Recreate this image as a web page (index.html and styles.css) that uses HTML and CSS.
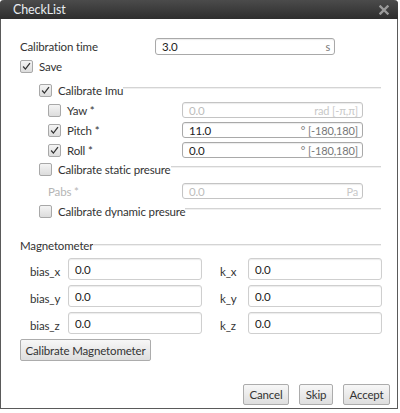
FILE: index.html
```html
<!DOCTYPE html>
<html>
<head>
<meta charset="utf-8">
<link rel="stylesheet" href="styles.css">
</head>
<body>
<div class="window">
  <div class="titlebar">
    <span class="title">CheckList</span>
    <svg class="close" width="10" height="10" viewBox="0 0 10 10"><path d="M1.5 1.5 L8.5 8.5 M8.5 1.5 L1.5 8.5" stroke="#9a9a9a" stroke-width="2.4" stroke-linecap="square"/></svg>
  </div>
  <div class="content">
    <div class="row row-time">
      <span class="lbl lbl-time">Calibration time</span>
      <div class="field field-time"><span class="val">3.0</span><span class="unit">s</span></div>
    </div>
    <div class="row row-save">
      <span class="cb"><svg viewBox="0 0 13 13"><path d="M2.5 6.5 L5.2 9.6 L10.6 2.6" fill="none" stroke="#333" stroke-width="1.5"/></svg></span>
      <span class="cblabel">Save</span>
    </div>

    <div class="group-head gh-imu">
      <span class="cb"><svg viewBox="0 0 13 13"><path d="M2.5 6.5 L5.2 9.6 L10.6 2.6" fill="none" stroke="#333" stroke-width="1.5"/></svg></span>
      <span class="cblabel">Calibrate Imu</span>
      <span class="rule"></span>
    </div>
    <div class="sub sub-first">
      <span class="cb"></span>
      <span class="sublabel">Yaw *</span>
      <div class="field field-imu disabled"><span class="val">0.0</span><span class="unit">rad [-π,π]</span></div>
    </div>
    <div class="sub">
      <span class="cb"><svg viewBox="0 0 13 13"><path d="M2.5 6.5 L5.2 9.6 L10.6 2.6" fill="none" stroke="#333" stroke-width="1.5"/></svg></span>
      <span class="sublabel">Pitch *</span>
      <div class="field field-imu"><span class="val">11.0</span><span class="unit">° [-180,180]</span></div>
    </div>
    <div class="sub">
      <span class="cb"><svg viewBox="0 0 13 13"><path d="M2.5 6.5 L5.2 9.6 L10.6 2.6" fill="none" stroke="#333" stroke-width="1.5"/></svg></span>
      <span class="sublabel">Roll *</span>
      <div class="field field-imu"><span class="val">0.0</span><span class="unit">° [-180,180]</span></div>
    </div>

    <div class="group-head gh-static">
      <span class="cb"></span>
      <span class="cblabel">Calibrate static presure</span>
      <span class="rule"></span>
    </div>
    <div class="sub sub-pabs">
      <span class="sublabel nocb disabled-text">Pabs *</span>
      <div class="field field-imu disabled"><span class="val">0.0</span><span class="unit">Pa</span></div>
    </div>

    <div class="group-head gh-dyn">
      <span class="cb"></span>
      <span class="cblabel">Calibrate dynamic presure</span>
      <span class="rule"></span>
    </div>

    <div class="mag-head">
      <span class="maglabel">Magnetometer</span>
      <span class="rule"></span>
    </div>
    <div class="mag-grid">
      <span class="mlbl">bias_x</span><div class="field mfield"><span class="val">0.0</span></div>
      <span class="mlbl klbl">k_x</span><div class="field mfield"><span class="val">0.0</span></div>
      <span class="mlbl">bias_y</span><div class="field mfield"><span class="val">0.0</span></div>
      <span class="mlbl klbl">k_y</span><div class="field mfield"><span class="val">0.0</span></div>
      <span class="mlbl">bias_z</span><div class="field mfield"><span class="val">0.0</span></div>
      <span class="mlbl klbl">k_z</span><div class="field mfield"><span class="val">0.0</span></div>
    </div>
    <div class="calib-row">
      <button class="btn btn-calib">Calibrate Magnetometer</button>
    </div>
    <div class="footer">
      <button class="btn btn-cancel">Cancel</button>
      <button class="btn btn-skip">Skip</button>
      <button class="btn btn-accept">Accept</button>
    </div>
  </div>
</div>
</body>
</html>
```
FILE: styles.css
```css
* { box-sizing: border-box; }
html, body { margin: 0; padding: 0; background: #ffffff; }
body {
  font-family: "Lato", "Open Sans", sans-serif;
  font-size: 11.5px;
  letter-spacing: -0.15px;
  color: #333;
  width: 400px;
  height: 413px;
  overflow: hidden;
}
.window {
  width: 398px;
  height: 409px;
  border: 1px solid #5a5a5a;
  border-top: none;
  border-radius: 4px 4px 0 0;
  background: #fff;
  display: flex;
  flex-direction: column;
}
.titlebar {
  height: 19px;
  margin: 0 -1px;
  background: linear-gradient(#4b4b4b, #2e2e2e);
  border-radius: 4px 4px 0 0;
  display: flex;
  align-items: center;
  justify-content: space-between;
  padding: 0 9px 0 13px;
}
.title {
  color: #e8ecf0;
  font-size: 12.5px;
  letter-spacing: -0.1px;
}
.close { display: block; }
.content {
  flex: 1;
  display: flex;
  flex-direction: column;
  padding: 0 16px 0 19px;
}
.row { display: flex; align-items: center; }
.row-time { margin-top: 19px; height: 17px; }
.lbl-time { width: 135px; }
.field {
  border: 1px solid #a9a9a9;
  border-radius: 3px;
  background: #fff;
  box-shadow: inset 0 1px 1px rgba(0,0,0,0.08);
  display: flex;
  align-items: center;
  justify-content: space-between;
  padding: 0 4px 0 6px;
  color: #222;
}
.field .unit { color: #777; font-size: 11px; }
.field-time { width: 180px; height: 17px; }
.field-imu { width: 181px; height: 16px; margin-left: auto; margin-right: 18px; }
.field.disabled { border-color: #c4c4c4; color: #bdbdbd; }
.field.disabled .unit { color: #c8c8c8; }

.cb {
  width: 13px;
  height: 13px;
  border: 1px solid #a8a8a8;
  border-radius: 2px;
  background: linear-gradient(#f4f4f4, #dcdcdc);
  display: inline-flex;
  flex: none;
}
.cb svg { width: 11px; height: 11px; }
.cblabel { margin-left: 6px; }
.row-save { margin-top: 4px; height: 14px; }

.group-head {
  display: flex;
  align-items: center;
  height: 14px;
  padding-left: 19px;
}
.group-head .cblabel { margin-left: 6px; }
.rule {
  flex: 1;
  height: 2px;
  margin-top: -4px;
  border-top: 1px solid #d4d4d4;
  border-bottom: 1px solid #f0f0f0;
}
.gh-imu { margin-top: 10px; }
.sub {
  display: flex;
  align-items: center;
  height: 16px;
  margin-top: 4px;
  padding-left: 28px;
}
.sub-first { margin-top: 5px; }
.sublabel { margin-left: 6px; }
.sublabel.nocb { margin-left: 0; }
.disabled-text { color: #b5b5b5; }
.gh-static { margin-top: 4px; }
.sub-pabs { margin-top: 7px; }
.gh-dyn { margin-top: 5px; }

.mag-head {
  display: flex;
  align-items: center;
  margin-top: 20px;
  height: 14px;
}
.mag-head .rule { margin-top: -1px; }
.mag-grid {
  display: grid;
  grid-template-columns: 48px 134px 46px 134px;
  grid-auto-rows: 22px;
  row-gap: 5px;
  margin-top: 6px;
  align-items: center;
}
.mlbl { padding-left: 10px; padding-top: 4px; }
.klbl { padding-left: 18px; }
.mfield { height: 22px; border-color: #cfcfcf; padding-left: 6px; }
.calib-row { margin-top: 5px; display: flex; }
.btn {
  font-family: inherit;
  font-size: 11.5px;
  letter-spacing: -0.15px;
  color: #333;
  border: 1px solid #acacac;
  border-radius: 2px;
  background: linear-gradient(#f7f7f7, #dedede);
  height: 22px;
  padding: 0 6px;
  margin: 0;
  white-space: nowrap;
}
.btn-calib { width: 131px; padding: 0; }
.footer {
  display: flex;
  justify-content: flex-end;
  gap: 10px;
  margin-top: 23px;
  margin-right: -9px;
}
.btn-cancel { width: 46px; height: 21px; padding: 0; }
.btn-skip { width: 34px; height: 21px; padding: 0; }
.btn-accept { width: 47px; height: 21px; padding: 0; }
```
